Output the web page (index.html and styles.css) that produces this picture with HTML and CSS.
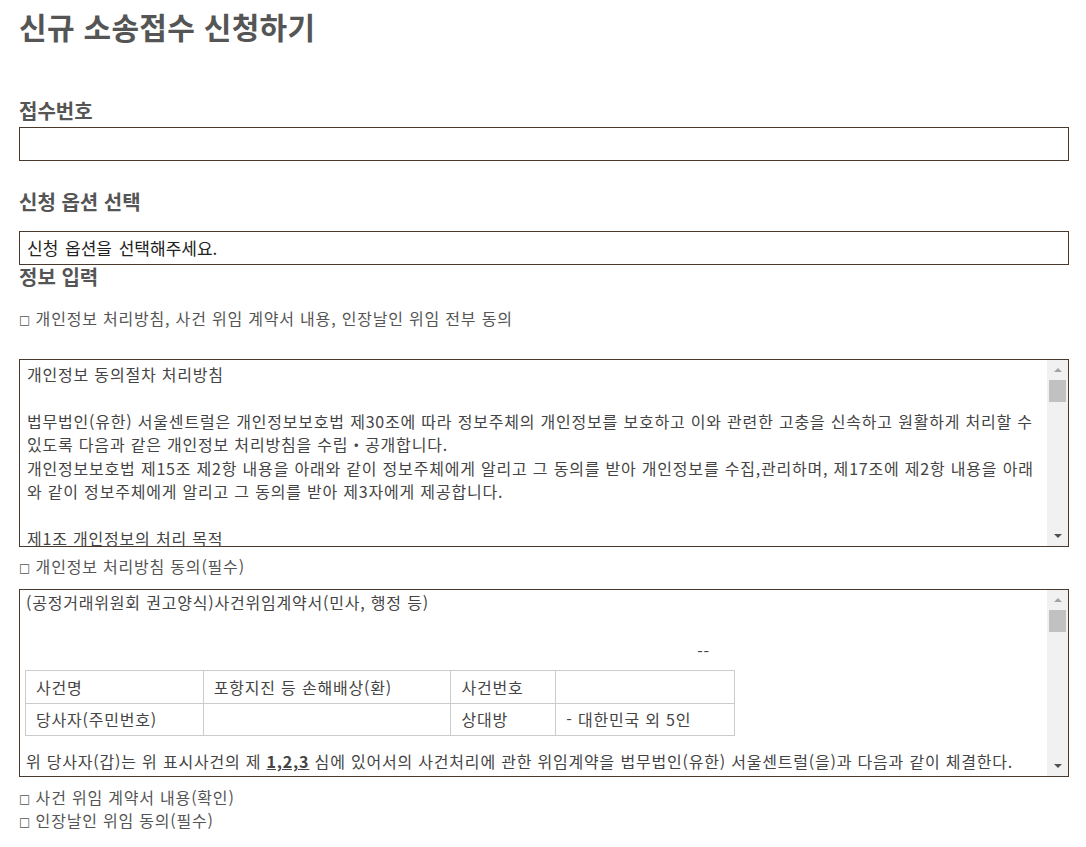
FILE: index.html
```html
<!DOCTYPE html>
<html lang="ko">
<head>
<meta charset="utf-8">
<title>신규 소송접수 신청하기</title>
<link rel="stylesheet" href="styles.css">
</head>
<body>
<div class="page">
  <h1 class="title">신규 소송접수 신청하기</h1>

  <h2 class="label label-first">접수번호</h2>
  <div class="field"></div>

  <h2 class="label label-option">신청 옵션 선택</h2>
  <div class="field select">신청 옵션을 선택해주세요.</div>

  <h2 class="label label-info">정보 입력</h2>
  <p class="check check-all"><span class="box">□</span> 개인정보 처리방침, 사건 위임 계약서 내용, 인장날인 위임 전부 동의</p>

  <div class="scrollbox scrollbox-first">
    <div class="scroll-content">
      <p class="line">개인정보 동의절차 처리방침</p>
      <p class="line">&nbsp;</p>
      <p class="line">법무법인(유한) 서울센트럴은 개인정보보호법 제30조에 따라 정보주체의 개인정보를 보호하고 이와 관련한 고충을 신속하고 원활하게 처리할 수 있도록 다음과 같은 개인정보 처리방침을 수립・공개합니다.</p>
      <p class="line">개인정보보호법 제15조 제2항 내용을 아래와 같이 정보주체에게 알리고 그 동의를 받아 개인정보를 수집,관리하며, 제17조에 제2항 내용을 아래와 같이 정보주체에게 알리고 그 동의를 받아 제3자에게 제공합니다.</p>
      <p class="line">&nbsp;</p>
      <p class="line">제1조 개인정보의 처리 목적</p>
    </div>
    <div class="scrollbar">
      <span class="arrow arrow-up"></span>
      <span class="thumb"></span>
      <span class="track"></span>
      <span class="arrow arrow-down"></span>
    </div>
  </div>

  <p class="check check-privacy"><span class="box">□</span> 개인정보 처리방침 동의(필수)</p>

  <div class="scrollbox scrollbox-second">
    <div class="scroll-content">
      <p class="line">(공정거래위원회 권고양식)사건위임계약서(민사, 행정 등)</p>
      <p class="line">&nbsp;</p>
      <p class="line dash">--</p>
      <table class="case-table">
        <tr>
          <td class="c1">사건명</td>
          <td class="c2">포항지진 등 손해배상(환)</td>
          <td class="c3">사건번호</td>
          <td class="c4"></td>
        </tr>
        <tr>
          <td class="c1">당사자(주민번호)</td>
          <td class="c2"></td>
          <td class="c3">상대방</td>
          <td class="c4">- 대한민국 외 5인</td>
        </tr>
      </table>
      <p class="line contract">위 당사자(갑)는 위 표시사건의 제 <b class="num">1,2,3</b> 심에 있어서의 사건처리에 관한 위임계약을 법무법인(유한) 서울센트럴(을)과 다음과 같이 체결한다.</p>
    </div>
    <div class="scrollbar">
      <span class="arrow arrow-up"></span>
      <span class="thumb"></span>
      <span class="track"></span>
      <span class="arrow arrow-down"></span>
    </div>
  </div>

  <p class="check check-contract"><span class="box">□</span> 사건 위임 계약서 내용(확인)</p>
  <p class="check"><span class="box">□</span> 인장날인 위임 동의(필수)</p>
</div>
</body>
</html>
```

FILE: styles.css
```css
* {
  box-sizing: border-box;
}

html, body {
  margin: 0;
  padding: 0;
  background: #ffffff;
}

body {
  font-family: "Noto Sans CJK KR", "Noto Sans", sans-serif;
  color: #444444;
}

.page {
  padding: 0 17px 0 19px;
}

.title {
  margin: 6px 0 0 0;
  font-size: 30px;
  line-height: 40px;
  font-weight: 700;
  color: #555555;
  letter-spacing: 0.3px;
}

.label {
  margin: 0;
  font-size: 20px;
  line-height: 26px;
  font-weight: 700;
  color: #555555;
}

.label-first {
  margin-top: 52px;
}

.label-option {
  margin-top: 28px;
}

.label-info {
  line-height: 24px;
}

.field {
  height: 34px;
  border: 1px solid #4a3a2e;
  margin-top: 3px;
  background: #ffffff;
}

.select {
  margin-top: 16px;
  padding: 0 7px;
  font-size: 17px;
  line-height: 31px;
  word-spacing: 2px;
  color: #222222;
}

.check {
  margin: 0;
  font-size: 16px;
  line-height: 23.4px;
  letter-spacing: 0.8px;
  color: #555555;
}

.check-all {
  margin-top: 18px;
}

.check-privacy {
  margin-top: 8px;
}

.check-contract {
  margin-top: 9px;
}

.box {
  font-family: "DejaVu Sans", sans-serif;
  font-size: 12px;
  line-height: 12px;
  letter-spacing: 0;
  vertical-align: 1px;
}

.scrollbox {
  display: flex;
  height: 188px;
  border: 1px solid #4a3a2e;
  overflow: hidden;
  background: #ffffff;
}

.scrollbox-first {
  margin-top: 28.6px;
}

.scrollbox-second {
  margin-top: 10.6px;
}

.scroll-content {
  flex: 1;
  min-width: 0;
  overflow: hidden;
  padding: 3px 7px 0 7px;
  font-size: 16px;
  line-height: 23.4px;
  letter-spacing: 0.8px;
  color: #444444;
}

.scrollbox-second .scroll-content {
  padding-top: 1px;
  padding-left: 6px;
}

.line {
  margin: 0;
}

.dash {
  width: 684px;
  margin-top: 2px;
  text-align: right;
}

.case-table {
  border-collapse: collapse;
  margin: 7px 0 0 -1px;
  width: 710px;
  font-size: 16px;
  letter-spacing: 0.8px;
  text-align: left;
  color: #444444;
}

.case-table td {
  border: 1px solid #cccccc;
  height: 32.5px;
  padding: 0 10px;
  line-height: 20px;
}

.case-table .c1 { width: 178px; }
.case-table .c2 { width: 248px; }
.case-table .c3 { width: 105px; }
.case-table .c4 { width: 179px; }

.contract {
  margin-top: 14px;
}

.num {
  font-weight: 700;
  text-decoration: underline;
}

.scrollbar {
  flex: 0 0 21px;
  display: flex;
  flex-direction: column;
  align-items: center;
  background: #f1f1f1;
  padding: 0 1px;
}

.arrow {
  flex: 0 0 20px;
  width: 100%;
  display: flex;
  align-items: center;
  justify-content: center;
}

.arrow::before {
  content: "";
  width: 0;
  height: 0;
  border-left: 4px solid transparent;
  border-right: 4px solid transparent;
}

.arrow-up::before {
  border-bottom: 4px solid #a3a3a3;
}

.arrow-down::before {
  border-top: 4px solid #505050;
}

.thumb {
  flex: 0 0 22px;
  width: 17px;
  background: #c1c1c1;
}

.track {
  flex: 1;
}
```
